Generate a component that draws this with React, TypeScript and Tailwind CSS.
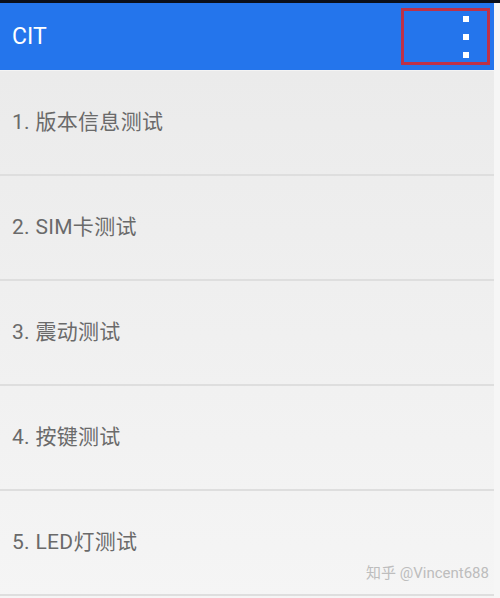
import React from "react";

const items = ["1. 版本信息测试", "2. SIM卡测试", "3. 震动测试", "4. 按键测试", "5. LED灯测试"];

const App: React.FC = () => {
  return (
    <div className="relative w-[500px] h-[598px] overflow-hidden bg-[#f2f2f2] font-['Roboto','Noto_Sans_CJK_SC',sans-serif]">
      {/* status strip */}
      <div className="h-[3px] bg-[#0b0f1a]" />

      <div className="flex">
        <div className="w-[494px] flex flex-col">
          {/* App bar */}
          <div className="h-[67px] bg-[#2475ec] flex items-center justify-between pl-3 pr-1">
            <span className="text-white text-[23px] leading-none">CIT</span>
            <div className="w-[89px] h-[57px] border-[3px] border-[#bd3148] flex items-center justify-end pr-[18px]">
              <div className="flex flex-col gap-[12px]">
                <span className="block w-[6px] h-[6px] bg-white" />
                <span className="block w-[6px] h-[6px] bg-white" />
                <span className="block w-[6px] h-[6px] bg-white" />
              </div>
            </div>
          </div>

          {/* List */}
          <div className="flex flex-col bg-linear-to-b from-[#ebebeb] to-[#f5f5f5] h-[528px] border-t border-[#f4f4f4]">
            {items.map((item) => (
              <div
                key={item}
                className="h-[105px] shrink-0 flex items-center pl-3 border-b-2 border-[#dedede]"
              >
                <span className="text-[21px] text-[#6a6a6a] tracking-[0.3px]">{item}</span>
              </div>
            ))}
          </div>
        </div>
        <div className="w-[6px] bg-[#f6f6f6]" />
      </div>

      {/* watermark */}
      <span className="absolute left-[366px] top-[566px] text-[15px] text-[#bdbdbd] leading-none">
        知乎 @Vincent688
      </span>
    </div>
  );
};

export default App;
